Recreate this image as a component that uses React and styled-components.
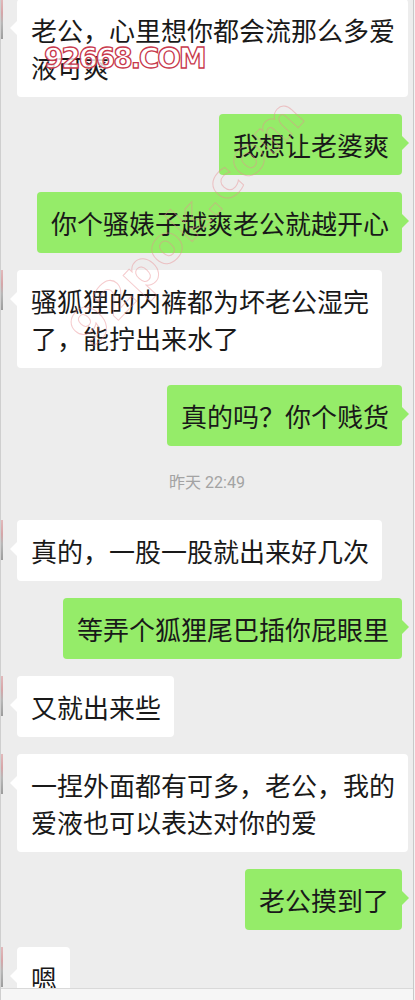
import React from "react";
import styled, { createGlobalStyle } from "styled-components";

const GlobalStyle = createGlobalStyle`
  html, body {
    margin: 0;
    padding: 0;
    background: #f4f4f4;
  }
  body {
    font-family: "Noto Sans CJK SC", "Noto Sans", sans-serif;
  }
`;

const messages = [
  { id: 1, side: "left", text: "老公，心里想你都会流那么多爱\n液可爽" },
  { id: 2, side: "right", text: "我想让老婆爽" },
  { id: 3, side: "right", text: "你个骚婊子越爽老公就越开心" },
  { id: 4, side: "left", text: "骚狐狸的内裤都为坏老公湿完\n了，能拧出来水了" },
  { id: 5, side: "right", text: "真的吗？你个贱货" },
  { id: 6, type: "time", text: "昨天 22:49" },
  { id: 7, side: "left", text: "真的，一股一股就出来好几次" },
  { id: 8, side: "right", text: "等弄个狐狸尾巴插你屁眼里" },
  { id: 9, side: "left", text: "又就出来些" },
  { id: 10, side: "left", text: "一捏外面都有可多，老公，我的\n爱液也可以表达对你的爱" },
  { id: 11, side: "right", text: "老公摸到了" },
  { id: 12, side: "left", text: "嗯" },
];

function ChatScreen() {
  return (
    <Frame>
      <Messages>
        {messages.map((m) =>
          m.type === "time" ? (
            <TimeStamp key={m.id}>{m.text}</TimeStamp>
          ) : (
            <Row key={m.id} side={m.side}>
              {m.side === "left" && <AvatarEdge />}
              <Bubble side={m.side}>{m.text}</Bubble>
            </Row>
          )
        )}
      </Messages>
      <InputBar />

      {/* ---------watermarks---------- */}
      <SiteStamp>92668.COM</SiteStamp>
      <DiagonalMark>92pok.com</DiagonalMark>
    </Frame>
  );
}

export default function App() {
  return (
    <>
      <GlobalStyle />
      <ChatScreen />
    </>
  );
}

const Frame = styled.div`
  position: relative;
  width: 414px;
  height: 1000px;
  box-sizing: border-box;
  border-left: 1px solid #cfcfcf;
  border-right: 1px solid #c9c9c9;
  background: #ededed;
  display: flex;
  flex-direction: column;
  overflow: hidden;
`;

const Messages = styled.div`
  flex: 1;
  min-height: 0;
  margin-top: -1px;
  display: flex;
  flex-direction: column;
  gap: 17px;
  overflow: hidden;
`;

const Row = styled.div`
  display: flex;
  align-items: flex-start;
  justify-content: ${(p) => (p.side === "right" ? "flex-end" : "flex-start")};
  padding: ${(p) => (p.side === "right" ? "0 11px 0 0" : "0 4px 0 0")};
  gap: 14px;
`;

const AvatarEdge = styled.div`
  flex-shrink: 0;
  width: 2px;
  height: 40px;
  background: linear-gradient(180deg, #e2b9bb 0%, #d6a5a8 35%, #b8b8b8 60%, #9c9c9c 100%);
`;

const Bubble = styled.div`
  position: relative;
  box-sizing: border-box;
  padding: 12px 13px 12px 14px;
  border-radius: 4px;
  background: ${(p) => (p.side === "right" ? "#95ec69" : "#ffffff")};
  color: #191919;
  font-size: 26px;
  line-height: 37px;
  white-space: pre-line;

  &::before {
    content: "";
    position: absolute;
    top: 22px;
    ${(p) => (p.side === "right" ? "right: -7px;" : "left: -7px;")}
    border-style: solid;
    border-width: ${(p) => (p.side === "right" ? "7px 0 7px 7px" : "7px 7px 7px 0")};
    border-color: ${(p) =>
      p.side === "right"
        ? "transparent transparent transparent #95ec69"
        : "transparent #ffffff transparent transparent"};
  }
`;

const TimeStamp = styled.div`
  height: 40px;
  line-height: 40px;
  text-align: center;
  font-family: Roboto, "Noto Sans CJK SC", sans-serif;
  font-size: 16px;
  color: #a3a3a3;
`;

const InputBar = styled.div`
  flex-shrink: 0;
  height: 11px;
  background: #f6f6f6;
  border-top: 1px solid #d9d9d9;
`;

const SiteStamp = styled.div`
  position: absolute;
  left: 43px;
  top: 44px;
  font-family: "DejaVu Sans", "Liberation Sans", sans-serif;
  font-weight: 700;
  font-size: 28px;
  line-height: 30px;
  letter-spacing: -2.2px;
  color: rgba(255, 255, 255, 0.82);
  -webkit-text-stroke: 1.3px #c8394c;
  pointer-events: none;
`;

const DiagonalMark = styled.div`
  position: absolute;
  left: 186px;
  top: 222px;
  transform: translate(-50%, -50%) rotate(-47deg);
  font-family: "DejaVu Sans", "Liberation Sans", sans-serif;
  font-weight: 700;
  font-size: 50px;
  letter-spacing: 1px;
  white-space: nowrap;
  color: transparent;
  -webkit-text-stroke: 1px rgba(232, 140, 145, 0.45);
  pointer-events: none;
`;
